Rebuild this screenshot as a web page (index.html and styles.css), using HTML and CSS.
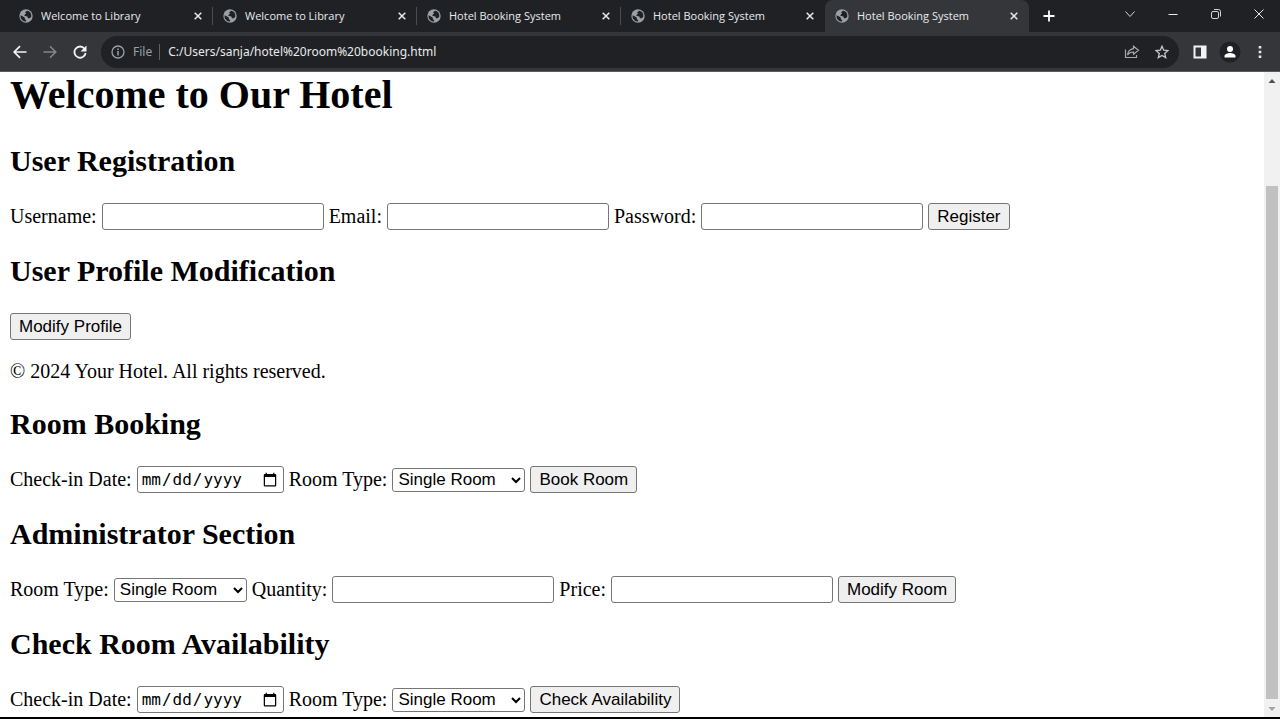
FILE: index.html
```html
<!DOCTYPE html>
<html lang="en">
<head>
<meta charset="utf-8">
<title>Hotel Booking System</title>
<link rel="stylesheet" href="styles.css">
</head>
<body>
<svg class="defs" aria-hidden="true">
  <symbol id="globe" viewBox="0 0 14 14">
    <circle cx="7" cy="7" r="6.7" fill="#9aa0a6"/>
    <path d="M8.800 1.800c-.9.3-2.300.7-2.400 1.500-.1.900.700 1.100.500 1.900-.2.700-1.700.5-1.700 1.300 0 .700 2.400.300 3.100 1.100.5.600.1 1.300.8 1.600.9.400 2.100-.300 3.100-1.300A5.600 5.600 0 0 0 8.800 1.800zM1.500 6.200c1.200 1 2.800 1.200 3.900 2 .8.600 0 1.600.8 2.200.6.400 1.300.9 1 2.200A5.600 5.600 0 0 1 1.500 6.200z" fill="#202124"/>
  </symbol>
  <symbol id="close" viewBox="0 0 10 10"><path d="M1.700 1.700l6.600 6.600M8.300 1.700L1.700 8.300" stroke="#e8eaed" stroke-width="1.500"/></symbol>
</svg>
<header class="browser">
  <div class="tabstrip">
    <div class="tab"><svg class="favicon"><use href="#globe"/></svg><span class="tab-title">Welcome to Library</span><button class="tab-close" aria-label="Close tab"><svg><use href="#close"/></svg></button></div>
    <div class="tab"><svg class="favicon"><use href="#globe"/></svg><span class="tab-title">Welcome to Library</span><button class="tab-close" aria-label="Close tab"><svg><use href="#close"/></svg></button></div>
    <div class="tab"><svg class="favicon"><use href="#globe"/></svg><span class="tab-title">Hotel Booking System</span><button class="tab-close" aria-label="Close tab"><svg><use href="#close"/></svg></button></div>
    <div class="tab before-active"><svg class="favicon"><use href="#globe"/></svg><span class="tab-title">Hotel Booking System</span><button class="tab-close" aria-label="Close tab"><svg><use href="#close"/></svg></button></div>
    <div class="tab active"><svg class="favicon"><use href="#globe"/></svg><span class="tab-title">Hotel Booking System</span><button class="tab-close" aria-label="Close tab"><svg><use href="#close"/></svg></button></div>
    <button class="new-tab" aria-label="New tab"><svg viewBox="0 0 12 12" width="12" height="12"><path d="M6 .5v11M.5 6h11" stroke="#fff" stroke-width="1.800"/></svg></button>
    <div class="window-controls">
      <button aria-label="Search tabs"><svg viewBox="0 0 12 12" width="12" height="12"><path d="M1.500 3.500L6 8.500l4.500-5" fill="none" stroke="#d5d6d8"/></svg></button>
      <button aria-label="Minimize"><svg viewBox="0 0 12 12" width="12" height="12"><path d="M1.500 6.500h9" stroke="#e8eaed"/></svg></button>
      <button aria-label="Restore"><svg viewBox="0 0 12 12" width="12" height="12"><rect x="1.500" y="3.500" width="7" height="7" rx="1.500" fill="none" stroke="#d5d6d8"/><path d="M4 1.500h4.500a2 2 0 0 1 2 2V8.500" fill="none" stroke="#d5d6d8"/></svg></button>
      <button aria-label="Close window"><svg viewBox="0 0 12 12" width="12" height="12"><path d="M1.500 1.500l9 9M10.500 1.500l-9 9" stroke="#e8eaed"/></svg></button>
    </div>
  </div>
  <div class="toolbar">
    <button class="tool" aria-label="Back"><svg viewBox="0 0 14 14" width="14" height="14"><path d="M13.500 7H1.500M7 1.200L1.200 7 7 12.800" fill="none" stroke="#f1f3f4" stroke-width="1.700"/></svg></button>
    <button class="tool" aria-label="Forward"><svg viewBox="0 0 14 14" width="14" height="14"><path d="M.5 7h12M7 1.200L12.800 7 7 12.800" fill="none" stroke="#85878a" stroke-width="1.500"/></svg></button>
    <button class="tool" aria-label="Reload"><svg viewBox="0 0 14 14" width="14" height="14"><path d="M11.500 3.700A5.600 5.600 0 1 0 12.600 8" fill="none" stroke="#f1f3f4" stroke-width="1.800"/><path d="M13.500.5v6H7.600z" fill="#f1f3f4"/></svg></button>
    <div class="omnibox">
      <svg class="info" viewBox="0 0 14 14" width="14" height="14"><circle cx="7" cy="7" r="6" fill="none" stroke="#9aa0a6" stroke-width="1.300"/><path d="M7 6v4.500M7 3.500V5" stroke="#9aa0a6" stroke-width="1.500"/></svg>
      <span class="scheme">File</span>
      <input class="url" type="text" aria-label="Address" value="C:/Users/sanja/hotel%20room%20booking.html">
      <button aria-label="Share"><svg viewBox="0 0 16 14" width="16" height="14"><path d="M1.500 4.500v8h11v-2.500" fill="none" stroke="#a5a8ac" stroke-width="1.200"/><path d="M9.500 1.200L14.500 5.200l-5 4V7C6.500 7 4.800 8 3.500 10c.4-3.500 2.500-5.900 6-6.400z" fill="none" stroke="#a5a8ac" stroke-width="1.200"/></svg></button>
      <button aria-label="Bookmark"><svg viewBox="0 0 14 14" width="14" height="14"><path d="M7 1.200l1.700 4 4.300.4-3.300 2.800 1 4.200L7 10.400l-3.700 2.200 1-4.200L1 5.600l4.300-.4z" fill="none" stroke="#c4c7c9" stroke-width="1.300"/></svg></button>
    </div>
    <button class="tool" aria-label="Side panel"><svg viewBox="0 0 14 14" width="14" height="14"><path d="M.5.5h13v13H.5zM2.500 2.500v9h5.500v-9z" fill="#f1f3f4" fill-rule="evenodd"/></svg></button>
    <button class="tool" aria-label="Profile"><svg viewBox="0 0 22 22" width="22" height="22"><circle cx="11" cy="11" r="10.500" fill="#202124"/><circle cx="11" cy="8" r="3" fill="#fff"/><path d="M5.500 16.500v-1.500c0-2 3.500-3 5.500-3s5.500 1 5.500 3v1.500z" fill="#fff"/></svg></button>
    <button class="tool" aria-label="Menu"><svg viewBox="0 0 4 14" width="4" height="14"><path d="M.7 1h2.600v2.600H.7zM.7 5.700h2.600v2.600H.7zM.7 10.400h2.600V13H.7z" fill="#e8eaed"/></svg></button>
  </div>
</header>
<div class="viewport">
  <main class="page">
    <h1>Welcome to Our Hotel</h1>
    <h2>User Registration</h2>
    <form class="row">
      <label for="username">Username:</label><input class="field" type="text" id="username">
      <label for="email">Email:</label><input class="field" type="email" id="email">
      <label for="password">Password:</label><input class="field" type="password" id="password">
      <button class="action" type="button">Register</button>
    </form>
    <h2>User Profile Modification</h2>
    <div class="row"><button class="action" type="button">Modify Profile</button></div>
    <p>© 2024 Your Hotel. All rights reserved.</p>
    <h2>Room Booking</h2>
    <form class="row">
      <label for="book-date">Check-in Date:</label><input class="date" type="date" id="book-date">
      <label for="book-type">Room Type:</label><select id="book-type"><option>Single Room</option><option>Double Room</option></select>
      <button class="action" type="button">Book Room</button>
    </form>
    <h2>Administrator Section</h2>
    <form class="row">
      <label for="admin-type">Room Type:</label><select id="admin-type"><option>Single Room</option><option>Double Room</option></select>
      <label for="quantity">Quantity:</label><input class="field" type="number" id="quantity">
      <label for="price">Price:</label><input class="field" type="number" id="price">
      <button class="action" type="button">Modify Room</button>
    </form>
    <h2>Check Room Availability</h2>
    <form class="row">
      <label for="check-date">Check-in Date:</label><input class="date" type="date" id="check-date">
      <label for="check-type">Room Type:</label><select id="check-type"><option>Single Room</option><option>Double Room</option></select>
      <button class="action" type="button">Check Availability</button>
    </form>
  </main>
  <div class="scrollbar" aria-hidden="true">
    <svg viewBox="0 0 16 16" width="16" height="16"><path d="M4.500 11L8 7l3.500 4z" fill="#505050"/></svg>
    <div class="track"><div class="thumb"></div></div>
    <svg viewBox="0 0 16 16" width="16" height="16"><path d="M4.500 6L8 10l3.500-4z" fill="#a3a3a3"/></svg>
  </div>
</div>
</body>
</html>
```
FILE: styles.css
```css
* { box-sizing: border-box; }
body {
  margin: 0;
  min-height: 100vh;
  display: flex;
  flex-direction: column;
  background: #fff;
  color: #000;
  font-family: "Liberation Serif", "Times New Roman", serif;
  font-size: 20px;
  border-bottom: 2px solid #000;
}
.defs { display: none; }

/* Browser frame */
.browser {
  background: #35363a;
  color: #e8eaed;
  font-family: "Open Sans", "Noto Sans", sans-serif;
  border-bottom: 1px solid #5a5b5e;
}
.browser button {
  display: flex;
  align-items: center;
  justify-content: center;
  padding: 0;
  border: 0;
  background: none;
}
.tabstrip {
  display: flex;
  height: 32px;
  padding-left: 9px;
  background: #202124;
}
.tab {
  display: flex;
  align-items: center;
  flex: 0 1 204px;
  min-width: 0;
  padding: 0 10px;
  font-size: 11px;
  line-height: 14px;
  background: linear-gradient(#4a4c50, #4a4c50) right center / 1px 18px no-repeat;
}
.tab.before-active { background: none; }
.tab.active { background: #35363a; border-radius: 8px 8px 0 0; }
.favicon { width: 14px; height: 14px; flex: none; margin-right: 8px; }
.tab-title { flex: 1; min-width: 0; overflow: hidden; white-space: nowrap; }
.tab-close svg { width: 10px; height: 10px; }
.new-tab { width: 40px; }
.window-controls { display: flex; margin-left: auto; height: 27px; }
.window-controls button { width: 43px; }
.toolbar {
  display: flex;
  align-items: center;
  height: 39px;
  padding: 0 5px;
}
.tool { width: 30px; height: 30px; flex: none; }
.omnibox {
  display: flex;
  align-items: center;
  flex: 1;
  height: 32px;
  margin: 0 6px;
  padding: 0 2px 0 10px;
  border-radius: 16px;
  background: #202124;
  font-family: "Noto Sans", "Open Sans", sans-serif;
  font-size: 12px;
}
.omnibox button { width: 30px; }
.scheme {
  margin-left: 8px;
  padding-right: 7px;
  border-right: 1px solid #5f6368;
  color: #9aa0a6;
  line-height: 16px;
}
.url {
  flex: 1;
  min-width: 0;
  padding: 0 8px;
  border: 0;
  outline: 0;
  background: none;
  color: #e8eaed;
  font: inherit;
}

/* Document */
.viewport { display: flex; flex: 1; }
.page { flex: 1; min-width: 0; padding: 0 10px; }
h1 { margin: 0 0 26px; font-size: 40px; line-height: 46px; }
h2 { margin: 24px 0 26px; font-size: 30px; line-height: 33px; }
p { margin: 20px 0 19px; line-height: 23px; }
.row {
  display: flex;
  flex-wrap: wrap;
  align-items: center;
  gap: 5px;
  min-height: 27px;
  line-height: 23px;
}
.field, .date, select, .action {
  margin: 0;
  border: 1px solid #767676;
  border-radius: 3px;
  background: #fff;
  color: #000;
  font-family: "Liberation Sans", Arial, sans-serif;
  font-size: 17px;
}
.field { width: 222px; height: 27px; padding: 1px 2px; }
.date { width: 147px; height: 27px; padding: 1px 3px; font-family: "DejaVu Sans Mono", monospace; font-size: 16px; }
select { width: 133px; height: 24px; padding: 0 1px; }
.action { height: 27px; padding: 0 8px; background: #efefef; }

.scrollbar {
  display: flex;
  flex-direction: column;
  width: 16px;
  background: #f1f1f1;
}
.track { display: flex; flex: 1; flex-direction: column; justify-content: flex-end; padding: 0 2px 2px; }
.thumb { height: 84%; background: #c1c1c1; }
```
